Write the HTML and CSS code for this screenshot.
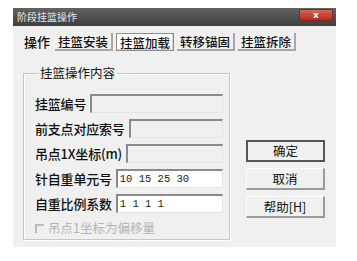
FILE: index.html
```html
<!DOCTYPE html>
<html lang="zh">
<head>
<meta charset="utf-8">
<link rel="stylesheet" href="styles.css">
</head>
<body>
<div class="dialog">
  <div class="titlebar">
    <span class="title">阶段挂篮操作</span>
    <span class="close">x</span>
  </div>
  <div class="tabs">
    <span class="tabs-label">操作</span>
    <span class="tab">挂篮安装</span>
    <span class="tab tab-active">挂篮加载</span>
    <span class="tab">转移锚固</span>
    <span class="tab">挂篮拆除</span>
  </div>
  <div class="main">
    <fieldset class="group">
      <legend class="legend">挂篮操作内容</legend>
      <div class="row"><span class="label">挂篮编号</span><span class="input disabled"></span></div>
      <div class="row"><span class="label">前支点对应索号</span><span class="input disabled"></span></div>
      <div class="row"><span class="label">吊点1X坐标(m)</span><span class="input disabled"></span></div>
      <div class="row"><span class="label">针自重单元号</span><span class="input">10 15 25 30</span></div>
      <div class="row"><span class="label">自重比例系数</span><span class="input">1 1 1 1</span></div>
      <div class="check-row"><span class="checkbox"></span><span class="check-label">吊点1坐标为偏移量</span></div>
    </fieldset>
    <div class="buttons">
      <span class="btn btn-default">确定</span>
      <span class="btn">取消</span>
      <span class="btn">帮助[H]</span>
    </div>
  </div>
</div>
</body>
</html>
```

FILE: styles.css
```css
* { box-sizing: border-box; }
body {
  margin: 0;
  background: #fff;
  font-family: "Noto Sans CJK SC", "Noto Sans", sans-serif;
  color: #111;
}
.dialog {
  margin: 8px 0 0 13px;
  width: 323px;
  height: 239px;
  background: #f0f0f0;
  display: flex;
  flex-direction: column;
}
.titlebar {
  height: 18px;
  display: flex;
  justify-content: space-between;
  align-items: flex-start;
  padding: 0 3px 0 4px;
  background: linear-gradient(#626262, #3f3f3f);
}
.title {
  font-size: 10px;
  line-height: 18px;
  color: #e6e6e6;
}
.close {
  margin-top: 1px;
  width: 34px;
  height: 12px;
  border-radius: 2px;
  background: linear-gradient(#d8655a, #b8281c);
  border: 1px solid #7a2a22;
  color: #fff;
  font-family: "DejaVu Sans", sans-serif;
  font-size: 9px;
  font-weight: bold;
  line-height: 10px;
  text-align: center;
}
.tabs {
  display: flex;
  align-items: center;
  margin: 7px 0 0 11px;
  height: 18px;
}
.tabs-label {
  font-size: 13px;
  line-height: 18px;
  margin-right: 5px;
  font-weight: 500;
}
.tab {
  font-size: 12.5px;
  line-height: 15px;
  height: 18px;
  padding: 1px 3px 0 3px;
  margin-right: 3px;
  border-right: 2px solid #a8a8a8;
  border-bottom: 2px solid #a8a8a8;
  background: #f0f0f0;
  font-weight: 500;
}
.tab-active {
  background: #fff;
  border: 1px solid #8c8c8c;
  box-shadow: inset -1px -1px 0 #cfcfcf;
  padding: 1px 3px 0 3px;
}
.main {
  display: flex;
  margin: 14px 0 0 10px;
}
.group {
  margin: 0;
  width: 207px;
  padding: 13px 6px 3px 11px;
  border: 1px solid #c6c6c6;
  box-shadow: inset 1px 1px 0 #fff, 1px 1px 0 #fff;
  display: flex;
  flex-direction: column;
  gap: 6px;
}
.legend {
  padding: 0 2px;
  margin-left: 3px;
  font-size: 12.5px;
  line-height: 16px;
}
.row {
  display: flex;
  align-items: center;
  height: 19px;
}
.label {
  font-size: 13px;
  line-height: 19px;
  white-space: nowrap;
  margin-right: 4px;
  letter-spacing: -0.2px;
  font-weight: 500;
}
.input {
  flex: 1;
  height: 19px;
  background: #fff;
  border-top: 2px solid #8a8a8a;
  border-left: 2px solid #8a8a8a;
  border-right: 1px solid #e4e4e4;
  border-bottom: 1px solid #e4e4e4;
  font-family: "Liberation Mono", monospace;
  font-size: 10.5px;
  line-height: 16px;
  padding-left: 2px;
  color: #222;
}
.input.disabled {
  background: #f0f0f0;
}
.check-row {
  display: flex;
  align-items: center;
  height: 16px;
  margin-top: 1px;
}
.checkbox {
  width: 9px;
  height: 9px;
  border-top: 2px solid #bdbdbd;
  border-left: 2px solid #bdbdbd;
  margin-right: 4px;
}
.check-label {
  font-size: 12.5px;
  color: #b4b4b4;
  line-height: 16px;
}
.buttons {
  display: flex;
  flex-direction: column;
  gap: 6px;
  margin: 75px 0 0 16px;
}
.btn {
  width: 79px;
  height: 22px;
  font-size: 12.5px;
  line-height: 19px;
  text-align: center;
  background: #f0f0f0;
  border-right: 2px solid #9a9a9a;
  border-bottom: 2px solid #9a9a9a;
  border-top: 1px solid #fff;
  border-left: 1px solid #fff;
}
.btn-default {
  border: 2px solid #555;
  line-height: 18px;
}
```
